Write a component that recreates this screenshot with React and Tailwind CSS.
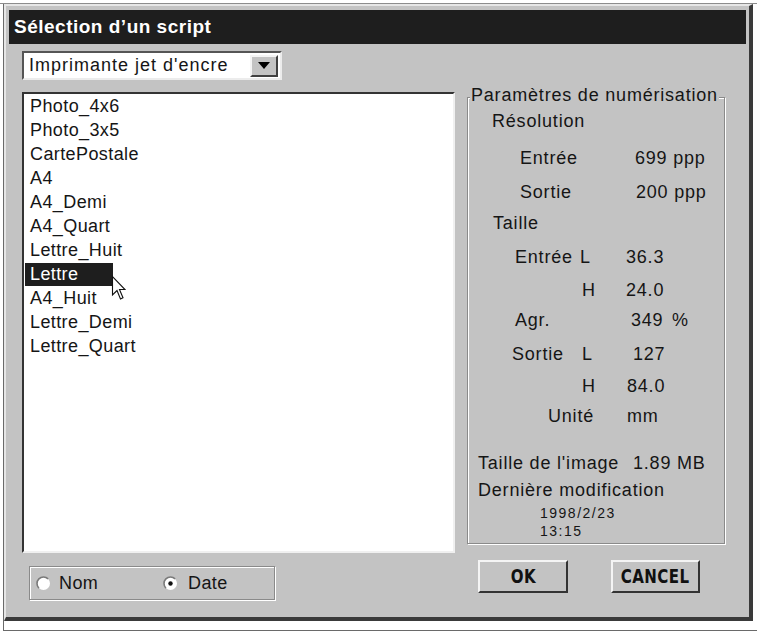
import React from "react";

const items = [
  "Photo_4x6",
  "Photo_3x5",
  "CartePostale",
  "A4",
  "A4_Demi",
  "A4_Quart",
  "Lettre_Huit",
  "Lettre",
  "A4_Huit",
  "Lettre_Demi",
  "Lettre_Quart",
];

const Radio = ({ checked }) => (
  <svg width="15" height="15" viewBox="0 0 15 15">
    <circle cx="7.5" cy="7.5" r="6.5" fill="#fff" />
    <path d="M2.9 12.1 A6.5 6.5 0 0 1 12.1 2.9" fill="none" stroke="#7a7a7a" strokeWidth="1.6" />
    {checked && <circle cx="7.5" cy="7.5" r="2.2" fill="#111" />}
  </svg>
);

const Cursor = () => (
  <svg width="15" height="26" viewBox="0 0 15 26" className="absolute left-[87px] top-[181px]">
    <path d="M1.5 1.5 L1.5 20 L6 15.5 L9.5 24 L12 22.8 L8.5 14.5 L14 14.5 Z" fill="#fff" stroke="#111" strokeWidth="1.1" strokeLinejoin="miter" />
  </svg>
);

export default function App() {
  return (
    <div className="h-[634px] w-[770px] bg-white pt-[3px] font-['Liberation_Sans',Arial,sans-serif] text-[#151515]">
      <div className="w-[757px] border-t border-[#8c8c8c]">
        <div className="ml-[3px] h-[627px] border-b border-l border-[#6a6a6a]">
          {/* dialog */}
          <div className="h-[617px] w-[749px] border-t-2 border-l-2 border-r-4 border-b-4 border-t-[#e6e6e6] border-l-[#e6e6e6] border-r-[#3a3a3a] border-b-[#3a3a3a] bg-[#c3c3c3]">
            <div className="mx-[3px] mt-[4px] flex h-[34px] items-center bg-[#1e1e1e] pl-[5px] pt-[1px] text-[19px] font-bold tracking-[0.5px] text-white">
              Sélection d’un script
            </div>

            <div className="mt-[7px] flex pl-[16px]">
              {/* left column */}
              <div className="w-[433px]">
                <div className="flex h-[29px] w-[260px] items-center border-2 border-t-[#555] border-l-[#555] border-r-[#ececec] border-b-[#ececec] bg-white">
                  <span className="flex-1 pl-[5px] text-[18px] tracking-[1px]">Imprimante jet d'encre</span>
                  <div className="mr-[2px] flex h-[22px] w-[28px] items-center justify-center border-2 border-t-[#f4f4f4] border-l-[#f4f4f4] border-r-[#404040] border-b-[#404040] bg-[#c3c3c3]">
                    <svg width="12" height="7" viewBox="0 0 12 7">
                      <path d="M0 0 H12 L6 7 Z" fill="#000" />
                    </svg>
                  </div>
                </div>

                <div className="relative mt-[12px] h-[461px] w-[433px] border-2 border-t-[#333] border-l-[#333] border-r-[#f0f0f0] border-b-[#f0f0f0] bg-white text-[18px] tracking-[0.4px]">
                  {items.map((it) => (
                    <div key={it} className="flex h-[24px] items-center">
                      <span
                        className={
                          it === "Lettre"
                            ? "ml-[1px] flex h-[23px] w-[88px] items-center bg-[#1e1e1e] pl-[5px] text-white"
                            : "ml-[1px] pl-[5px]"
                        }
                      >
                        {it}
                      </span>
                    </div>
                  ))}
                  <Cursor />
                </div>

                <div className="ml-[7px] mt-[13px] flex h-[34px] w-[246px] items-center border border-[#8a8a8a] pl-[6px] text-[18px] tracking-[0.4px] shadow-[inset_1px_1px_0_#fff,1px_1px_0_#fff]">
                  <div className="flex w-[127px] items-center">
                    <Radio />
                    <span className="ml-[8px]">Nom</span>
                  </div>
                  <div className="flex items-center">
                    <Radio checked />
                    <span className="ml-[10px]">Date</span>
                  </div>
                </div>
              </div>

              {/* right column */}
              <div className="ml-[12px] w-[258px] text-[18px] tracking-[0.8px]">
                <div className="relative mt-[46px] h-[447px] border border-[#8a8a8a] shadow-[inset_1px_1px_0_#fff,1px_1px_0_#fff]">
                  <span className="absolute left-[2px] top-[-13px] bg-[#c3c3c3] px-[1px] leading-[20px]">
                    Paramètres de numérisation
                  </span>

                  <div className="mt-[11px] flex h-[24px] items-center pl-[24px]">Résolution</div>
                  <div className="mt-[13px] flex h-[24px] items-center">
                    <span className="w-[167px] pl-[52px]">Entrée</span>
                    <span>699 ppp</span>
                  </div>
                  <div className="mt-[10px] flex h-[24px] items-center">
                    <span className="w-[168px] pl-[52px]">Sortie</span>
                    <span>200 ppp</span>
                  </div>
                  <div className="mt-[7px] flex h-[24px] items-center pl-[25px]">Taille</div>
                  <div className="mt-[10px] flex h-[24px] items-center">
                    <span className="w-[112px] pl-[47px]">Entrée</span>
                    <span className="w-[46px]">L</span>
                    <span>36.3</span>
                  </div>
                  <div className="mt-[9px] flex h-[24px] items-center">
                    <span className="w-[158px] pl-[114px]">H</span>
                    <span>24.0</span>
                  </div>
                  <div className="mt-[6px] flex h-[24px] items-center">
                    <span className="w-[163px] pl-[47px]">Agr.</span>
                    <span className="w-[41px]">349</span>
                    <span>%</span>
                  </div>
                  <div className="mt-[10px] flex h-[24px] items-center">
                    <span className="w-[114px] pl-[44px]">Sortie</span>
                    <span className="w-[51px]">L</span>
                    <span>127</span>
                  </div>
                  <div className="mt-[8px] flex h-[24px] items-center">
                    <span className="w-[159px] pl-[114px]">H</span>
                    <span>84.0</span>
                  </div>
                  <div className="mt-[6px] flex h-[24px] items-center">
                    <span className="w-[159px] pl-[80px]">Unité</span>
                    <span>mm</span>
                  </div>
                  <div className="mt-[23px] flex h-[24px] items-center">
                    <span className="w-[165px] pl-[10px]">Taille de l'image</span>
                    <span>1.89 MB</span>
                  </div>
                  <div className="mt-[3px] flex h-[24px] items-center pl-[10px]">Dernière modification</div>
                  <div className="mt-[2px] flex h-[18px] items-center pl-[72px] text-[14px] tracking-[1.5px]">1998/2/23</div>
                  <div className="flex h-[18px] items-center pl-[72px] text-[14px] tracking-[1.5px]">13:15</div>
                </div>

                <div className="mt-[16px] flex font-['DejaVu_Sans_Condensed','Liberation_Sans_Narrow','DejaVu_Sans',sans-serif] text-[19px] font-bold tracking-[0.5px] text-[#111]">
                  <button className="ml-[11px] flex h-[33px] w-[90px] items-center justify-center border-2 border-t-[#f4f4f4] border-l-[#f4f4f4] border-r-[#333] border-b-[#333] bg-[#c3c3c3]">
                    <span className="inline-block scale-x-[0.88]">OK</span>
                  </button>
                  <button className="ml-[43px] flex h-[33px] w-[89px] items-center justify-center border-2 border-t-[#f4f4f4] border-l-[#f4f4f4] border-r-[#333] border-b-[#333] bg-[#c3c3c3]">
                    <span className="inline-block scale-x-[0.88]">CANCEL</span>
                  </button>
                </div>
              </div>
            </div>
          </div>
        </div>
      </div>
    </div>
  );
}
